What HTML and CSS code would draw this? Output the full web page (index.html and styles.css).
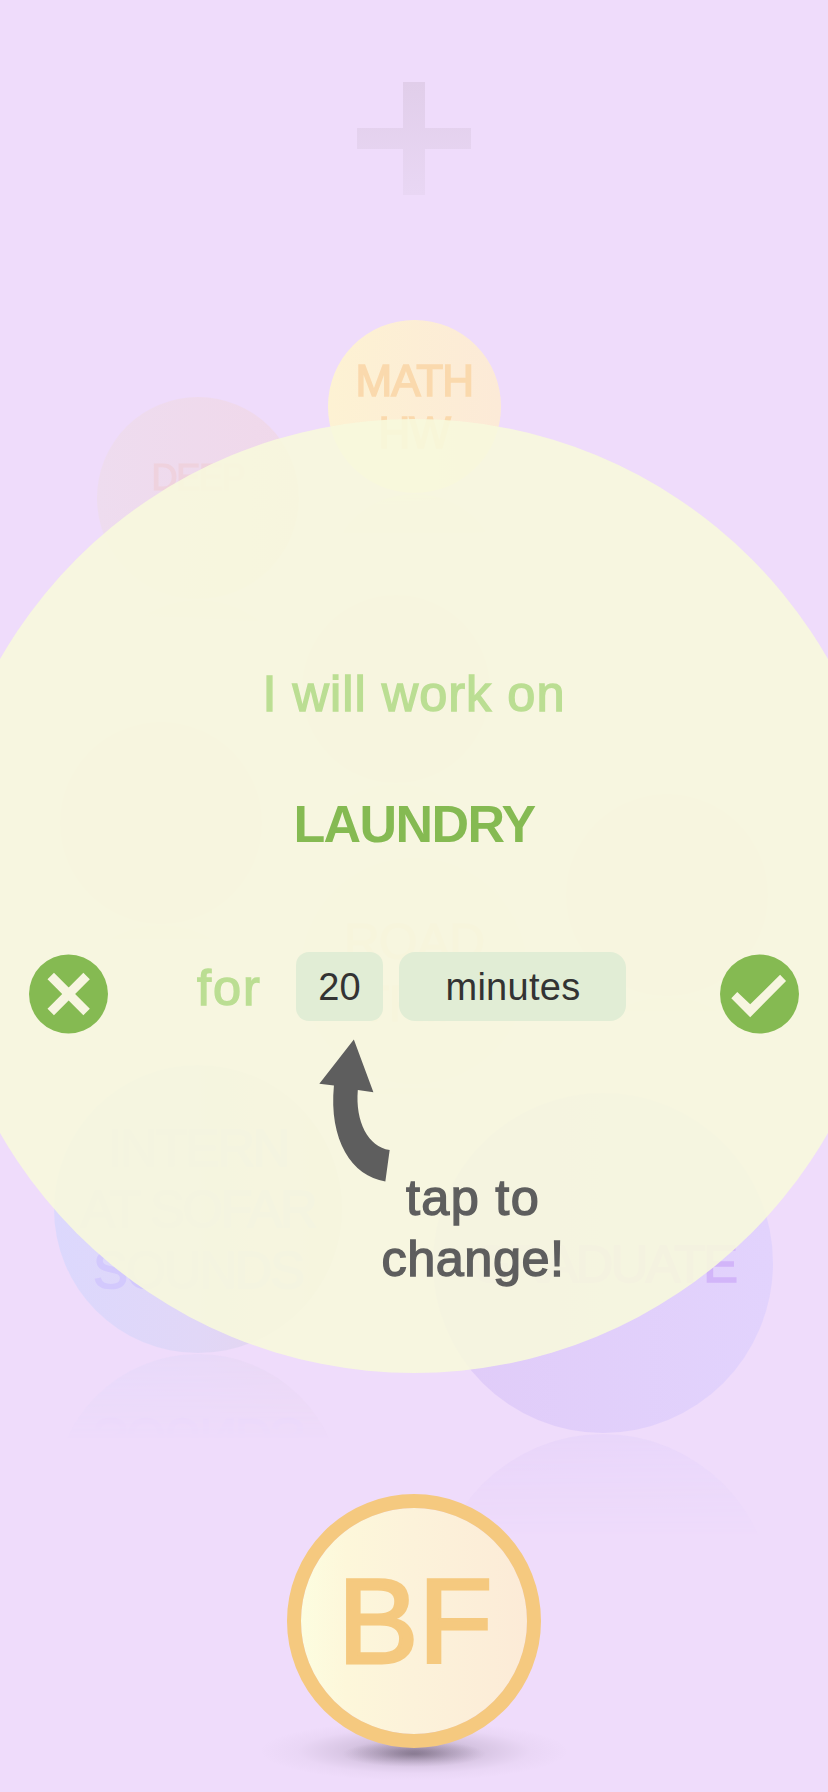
FILE: index.html
```html
<!DOCTYPE html>
<html lang="en">
<head>
<meta charset="utf-8">
<title>Bubbles</title>
<link rel="stylesheet" href="styles.css">
</head>
<body>
<main class="screen">
  <button class="add" aria-label="Add">
    <svg class="add-icon" viewBox="0 0 114 113">
      <defs><linearGradient id="fade" x1="0" y1="0" x2="0" y2="1"><stop offset="0" stop-color="#e1ceea"/><stop offset="1" stop-color="#e9d7f4"/></linearGradient></defs>
      <path fill="url(#fade)" d="M46 0H68V46H114V67H68V113H46V67H0V46H46Z"/>
    </svg>
  </button>

  <div class="bubbles">
    <div class="bubble deep">DEEP</div>
    <div class="bubble math">MATH<br>HW</div>
    <div class="bubble faint-a"></div>
    <div class="bubble faint-b"></div>
    <div class="bubble faint-c"></div>
    <div class="bubble road">ROAD<br>TRIP</div>
    <div class="bubble intern"><span>INTERN</span><span>AT SOFAR</span><span>SOUNDS</span></div>
    <div class="bubble graduate">GRADUATE</div>
  </div>

  <section class="dialog">
    <div class="dialog-body">
      <p class="lead">I will work on</p>
      <h1 class="task">LAUNDRY</h1>
      <div class="row">
        <button class="round" aria-label="Cancel">
          <svg viewBox="0 0 238 240"><circle cx="119" cy="120" r="119" fill="#85ba52"/><path d="M65.500 66L173.500 174M173.500 66L65.500 174" stroke="#f7f5e0" stroke-width="27.500"/></svg>
        </button>
        <span class="for">for</span>
        <button class="pill amount">20</button>
        <button class="pill unit">minutes</button>
        <button class="round confirm" aria-label="Confirm">
          <svg viewBox="0 0 238 240"><circle cx="119" cy="120" r="119" fill="#85ba52"/><path d="M34 133L52 114L91 151L181 62L199 81L91 190Z" fill="#f7f5e0"/></svg>
        </button>
      </div>
      <div class="hint">
        <svg class="arrow" viewBox="957 356 214 430"><path fill="#5e5e5e" d="M1062 357L1121 516L1074 509C1066 605 1105 680 1170 690L1157 785C1056 770 986 660 1002 496L958 490Z"/></svg>
        <p class="hint-text"><span class="hint-first">tap to</span><br>change!</p>
      </div>
    </div>
  </section>

  <div class="profile">
    <button class="avatar">BF</button>
    <div class="shadow"></div>
  </div>
</main>
</body>
</html>
```

FILE: styles.css
```css
* { box-sizing: border-box; }

body {
  margin: 0;
  font-family: "Liberation Sans", Arial, sans-serif;
}

button {
  border: 0;
  padding: 0;
  background: none;
  font: inherit;
  color: inherit;
}

.screen {
  position: relative;
  display: flex;
  flex-direction: column;
  justify-content: space-between;
  align-items: center;
  width: 828px;
  height: 1792px;
  padding-top: 82px;
  overflow: hidden;
  background: #efdcfb;
}

.add { height: 113px; }
.add-icon { display: block; width: 114px; height: 113px; }

/* Bubbles float freely on the canvas */
.bubble {
  position: absolute;
  display: flex;
  flex-direction: column;
  align-items: center;
  border-radius: 50%;
  text-align: center;
  white-space: nowrap;
  -webkit-box-reflect: below 1px linear-gradient(transparent 70%, rgba(0, 0, 0, 0.42));
}

.math {
  left: 328px;
  top: 320px;
  width: 172.500px;
  height: 172.500px;
  display: block;
  padding-top: 35px;
  background: linear-gradient(90deg, #fdf2d3, #fcead7);
  color: #fad9ad;
  font-size: 44px;
  line-height: 52px;
  letter-spacing: -1px;
  -webkit-text-stroke: 1.600px #fad9ad;
}

.deep {
  left: 97px;
  top: 397px;
  width: 202px;
  height: 202px;
  padding-top: 60px;
  background: linear-gradient(90deg, #eedcef, #f0d8ea);
  color: #efd2de;
  font-size: 36px;
  line-height: 42px;
  letter-spacing: -1.300px;
  -webkit-text-stroke: 1.200px #efd2de;
}

.faint-a { left: 302px; top: 595px; width: 188px; height: 188px; background: #efd8ed; }
.faint-b { left: 60px; top: 722px; width: 202px; height: 202px; background: #efd8ee; }
.faint-c { left: 566px; top: 794px; width: 202px; height: 202px; background: #efd8ee; }

.road {
  left: 301px;
  top: 858px;
  width: 226px;
  height: 226px;
  display: block;
  padding-top: 53px;
  background: #efd9f0;
  color: #f6d6d6;
  font-size: 50px;
  line-height: 62px;
  letter-spacing: -1px;
  -webkit-text-stroke: 1px #f6d6d6;
}

.intern {
  left: 54px;
  top: 1065px;
  width: 288px;
  height: 288px;
  padding-top: 53px;
  background: linear-gradient(90deg, #dcd8fd, #e1d7f7 50%, #e6d3e9);
  color: #d3c9fd;
  font-size: 52px;
  line-height: 61px;
  letter-spacing: -2.200px;
  -webkit-text-stroke: 1.600px #d3c9fd;
}

.graduate {
  left: 433px;
  top: 1093px;
  width: 340px;
  height: 340px;
  padding-top: 141px;
  background: linear-gradient(90deg, #e0cbf8, #e2d3fd);
  color: #d2b5f9;
  font-size: 52px;
  line-height: 60px;
  letter-spacing: -2.500px;
  -webkit-text-stroke: 1.600px #d2b5f9;
}

/* Dialog: a disc wider than the screen, laid over the bubbles */
.dialog {
  position: absolute;
  left: -63px;
  top: 419px;
  width: 954px;
  height: 954px;
  padding: 245px 63px 0;
  border-radius: 50%;
  background: rgba(247, 248, 221, 0.9);
}

.lead,
.task {
  margin: 0;
  line-height: 60px;
  text-align: center;
}

.lead {
  color: #bbde93;
  font-size: 50.500px;
  letter-spacing: 1px;
  -webkit-text-stroke: 1.400px #bbde93;
}

.task {
  margin-top: 70px;
  color: #85ba52;
  font-size: 52px;
  font-weight: 700;
  letter-spacing: -1.600px;
}

.row {
  display: flex;
  align-items: flex-start;
  height: 82px;
  margin-top: 98px;
  padding: 0 29px;
}

.round { width: 79px; height: 80px; margin-top: 2px; }
.round svg { display: block; width: 79px; height: 80px; }
.confirm { margin-left: auto; }

.for {
  width: 99px;
  margin: 6px 0 0 89px;
  color: #bbde93;
  font-size: 50.500px;
  line-height: 60px;
  letter-spacing: 2px;
  -webkit-text-stroke: 1.400px #bbde93;
}

.pill {
  height: 69px;
  background: #e1edd5;
  color: #333;
  font-size: 38px;
  line-height: 70px;
  text-align: center;
}

.amount { width: 87px; border-radius: 13px; }
.unit { width: 227px; margin-left: 16px; border-radius: 16px; letter-spacing: 0.300px; text-indent: 1px; }

.hint {
  display: flex;
  align-items: flex-start;
  margin-top: 5px;
  padding-left: 319px;
}

.arrow { display: block; width: 71px; height: 143px; }

.hint-text {
  width: 184px;
  margin: 128px 0 0 -9px;
  color: #5e5e5e;
  font-size: 50.500px;
  line-height: 61px;
  letter-spacing: 0.500px;
  text-align: center;
  white-space: nowrap;
  -webkit-text-stroke: 1.400px #5e5e5e;
}

.hint-first { letter-spacing: 1.300px; }

.profile {
  display: flex;
  flex-direction: column;
  align-items: center;
  height: 298px;
}

.avatar {
  position: relative;
  z-index: 1;
  flex: none;
  width: 254px;
  height: 254px;
  border: 14px solid #f5c97f;
  border-radius: 50%;
  background: linear-gradient(90deg, #fcfde0, #fdf7da 20%, #fcf2da 50%, #fcebd7) padding-box;
  color: #f5c97f;
  font-size: 121px;
  line-height: 226px;
  text-align: center;
  text-indent: 2px;
  -webkit-text-stroke: 3.200px #f5c97f;
}

.shadow {
  flex: none;
  width: 310px;
  height: 60px;
  margin-top: -27px;
  background:
    radial-gradient(ellipse 72px 13px at 50% 55%, rgba(70, 60, 75, 0.4), rgba(70, 60, 75, 0.16) 50%, transparent),
    radial-gradient(closest-side, rgba(75, 62, 85, 0.4), rgba(75, 62, 85, 0.15) 42%, rgba(75, 62, 85, 0.03) 75%, transparent);
}
```
